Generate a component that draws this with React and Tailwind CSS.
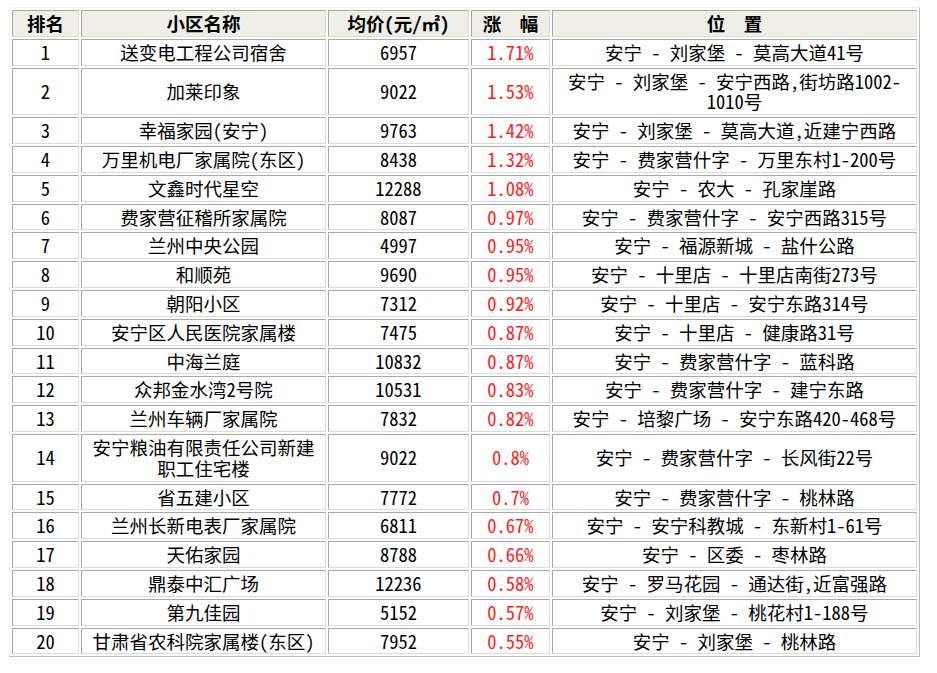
const rows = [
  [1, '送变电工程公司宿舍', '6957', '1.71%', '安宁 - 刘家堡 - 莫高大道41号'],
  [2, '加莱印象', '9022', '1.53%', ['安宁 - 刘家堡 - 安宁西路,街坊路1002-', '1010号']],
  [3, '幸福家园(安宁)', '9763', '1.42%', '安宁 - 刘家堡 - 莫高大道,近建宁西路'],
  [4, '万里机电厂家属院(东区)', '8438', '1.32%', '安宁 - 费家营什字 - 万里东村1-200号'],
  [5, '文鑫时代星空', '12288', '1.08%', '安宁 - 农大 - 孔家崖路'],
  [6, '费家营征稽所家属院', '8087', '0.97%', '安宁 - 费家营什字 - 安宁西路315号'],
  [7, '兰州中央公园', '4997', '0.95%', '安宁 - 福源新城 - 盐什公路'],
  [8, '和顺苑', '9690', '0.95%', '安宁 - 十里店 - 十里店南街273号'],
  [9, '朝阳小区', '7312', '0.92%', '安宁 - 十里店 - 安宁东路314号'],
  [10, '安宁区人民医院家属楼', '7475', '0.87%', '安宁 - 十里店 - 健康路31号'],
  [11, '中海兰庭', '10832', '0.87%', '安宁 - 费家营什字 - 蓝科路'],
  [12, '众邦金水湾2号院', '10531', '0.83%', '安宁 - 费家营什字 - 建宁东路'],
  [13, '兰州车辆厂家属院', '7832', '0.82%', '安宁 - 培黎广场 - 安宁东路420-468号'],
  [14, ['安宁粮油有限责任公司新建', '职工住宅楼'], '9022', '0.8%', '安宁 - 费家营什字 - 长风街22号'],
  [15, '省五建小区', '7772', '0.7%', '安宁 - 费家营什字 - 桃林路'],
  [16, '兰州长新电表厂家属院', '6811', '0.67%', '安宁 - 安宁科教城 - 东新村1-61号'],
  [17, '天佑家园', '8788', '0.66%', '安宁 - 区委 - 枣林路'],
  [18, '鼎泰中汇广场', '12236', '0.58%', '安宁 - 罗马花园 - 通达街,近富强路'],
  [19, '第九佳园', '5152', '0.57%', '安宁 - 刘家堡 - 桃花村1-188号'],
  [20, '甘肃省农科院家属楼(东区)', '7952', '0.55%', '安宁 - 刘家堡 - 桃林路'],
];

const cell =
  'border border-t-[#a9a9a9] border-l-[#a9a9a9] border-b-[#dcdcdc] border-r-[#dcdcdc] px-[2px] py-[2px] text-center align-middle';

const Lines = ({ value }) =>
  Array.isArray(value)
    ? value.map((line, i) => (
        <span key={i} className="block">
          {line}
        </span>
      ))
    : value;

const App = () => {
  return (
    <div
      className="min-h-screen bg-white pl-[9px] pt-[7px] text-[18.5px] leading-[20.8px] text-black whitespace-pre"
      style={{ fontFamily: '"Noto Sans Mono CJK SC", "Noto Sans CJK SC", "Liberation Serif", serif' }}
    >
      <table className="table-fixed w-[911px] border-separate border-spacing-[2px] border border-t-[#f2f2f2] border-l-[#f2f2f2] border-b-[#bdbdbd] border-r-[#bdbdbd]">
        <thead>
          <tr className="bg-[#efeee7] font-bold">
            <th className={`${cell} w-[67px]`}>排名</th>
            <th className={`${cell} w-[245px]`}>小区名称</th>
            <th className={`${cell} w-[141px]`}>均价(元/㎡)</th>
            <th className={`${cell} w-[79px]`}>涨　幅</th>
            <th className={cell}>位　置</th>
          </tr>
        </thead>
        <tbody>
          {rows.map(([rank, name, price, pct, loc]) => (
            <tr key={rank}>
              <td className={cell}>{rank}</td>
              <td className={cell}>
                <Lines value={name} />
              </td>
              <td className={cell}>{price}</td>
              <td className={`${cell} text-[#ff1a1a]`}>{pct}</td>
              <td className={cell}>
                <Lines value={loc} />
              </td>
            </tr>
          ))}
        </tbody>
      </table>
    </div>
  );
};

export default App;
